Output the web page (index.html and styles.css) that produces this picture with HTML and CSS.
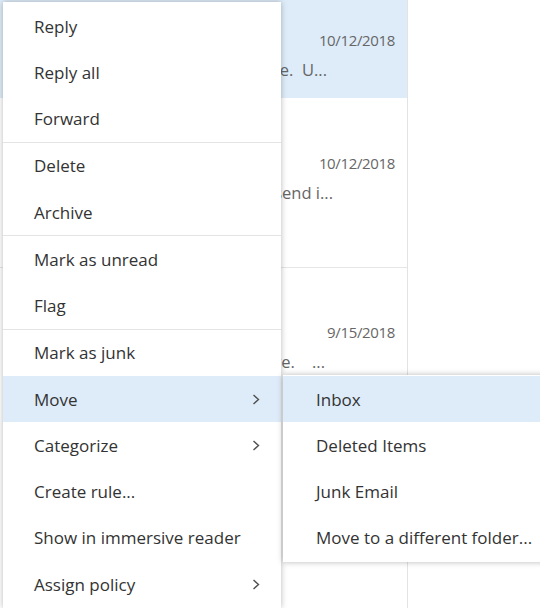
FILE: index.html
```html
<!DOCTYPE html>
<html>
<head>
<meta charset="utf-8">
<link rel="stylesheet" href="styles.css">
</head>
<body>
<div class="app">
  <div class="list">
    <div class="row selected first">
      <div class="date">10/12/2018</div>
      <div class="preview p1">Please see the attached message.  U...</div>
    </div>
    <div class="row second">
      <div class="date">10/12/2018</div>
      <div class="preview p2">Hello, please find the report I will send i...</div>
    </div>
    <div class="row third">
      <div class="date">9/15/2018</div>
      <div class="preview p3">Thanks, see you there.    ...</div>
    </div>
  </div>
  <div class="reading"></div>
</div>

<div class="menu main-menu">
  <div class="item">Reply</div>
  <div class="item">Reply all</div>
  <div class="item">Forward</div>
  <div class="sep"></div>
  <div class="item">Delete</div>
  <div class="item">Archive</div>
  <div class="sep"></div>
  <div class="item">Mark as unread</div>
  <div class="item">Flag</div>
  <div class="sep"></div>
  <div class="item">Mark as junk</div>
  <div class="item active has-sub">Move<svg class="chev" width="8" height="11" viewBox="0 0 8 11"><path d="M1.5 1 L6.5 5.5 L1.5 10" fill="none" stroke="#505050" stroke-width="1.4"/></svg></div>
  <div class="item has-sub">Categorize<svg class="chev" width="8" height="11" viewBox="0 0 8 11"><path d="M1.5 1 L6.5 5.5 L1.5 10" fill="none" stroke="#505050" stroke-width="1.4"/></svg></div>
  <div class="item">Create rule...</div>
  <div class="item">Show in immersive reader</div>
  <div class="item has-sub">Assign policy<svg class="chev" width="8" height="11" viewBox="0 0 8 11"><path d="M1.5 1 L6.5 5.5 L1.5 10" fill="none" stroke="#505050" stroke-width="1.4"/></svg></div>
</div>

<div class="menu sub-menu">
  <div class="item active">Inbox</div>
  <div class="item">Deleted Items</div>
  <div class="item">Junk Email</div>
  <div class="item">Move to a different folder...</div>
</div>
</body>
</html>
```

FILE: styles.css
```css
* { box-sizing: border-box; }
html, body {
  margin: 0;
  padding: 0;
  width: 540px;
  height: 608px;
  overflow: hidden;
  background: #ffffff;
  font-family: "Open Sans", "Noto Sans", sans-serif;
}
.app {
  display: flex;
  width: 540px;
  height: 608px;
}
.list {
  width: 408px;
  border-right: 1px solid #e3e3e3;
  display: flex;
  flex-direction: column;
}
.reading { flex: 1; background: #fff; }
.row {
  display: flex;
  flex-direction: column;
  gap: 10px;
  padding-right: 12px;
  color: #666666;
  line-height: 20px;
}
.row.selected { background: #deecf9; }
.row.first { height: 98px; padding-top: 30px; }
.row.second { height: 170px; padding-top: 55px; border-bottom: 1px solid #e6e6e6; }
.row.third { flex: 1; padding-top: 54px; }
.date {
  text-align: right;
  font-size: 15px;
  letter-spacing: -0.35px;
}
.preview {
  text-align: right;
  white-space: pre;
  overflow: hidden;
  font-size: 16.5px;
}
.preview.p1 { padding-right: 68px; }
.preview.p2 { padding-right: 62px; }
.preview.p3 { padding-right: 70px; }

.menu {
  position: absolute;
  background: #ffffff;
  box-shadow: 0 0 6px rgba(0,0,0,0.28);
  color: #333333;
  font-size: 17px;
}
.main-menu {
  left: 3px;
  top: 2px;
  width: 278px;
  padding: 1px 0;
}
.sub-menu {
  left: 283px;
  top: 375px;
  width: 270px;
  padding: 1px 0;
}
.item {
  height: 46.25px;
  display: flex;
  align-items: center;
  padding-left: 31px;
  padding-right: 21px;
  white-space: nowrap;
}
.sub-menu .item { padding-left: 33px; }
.item.active { background: #deecf9; }
.has-sub { justify-content: space-between; }
.chev { display: block; margin-top: 1px; }
.sep { height: 1px; background: #e4e4e4; }
```
